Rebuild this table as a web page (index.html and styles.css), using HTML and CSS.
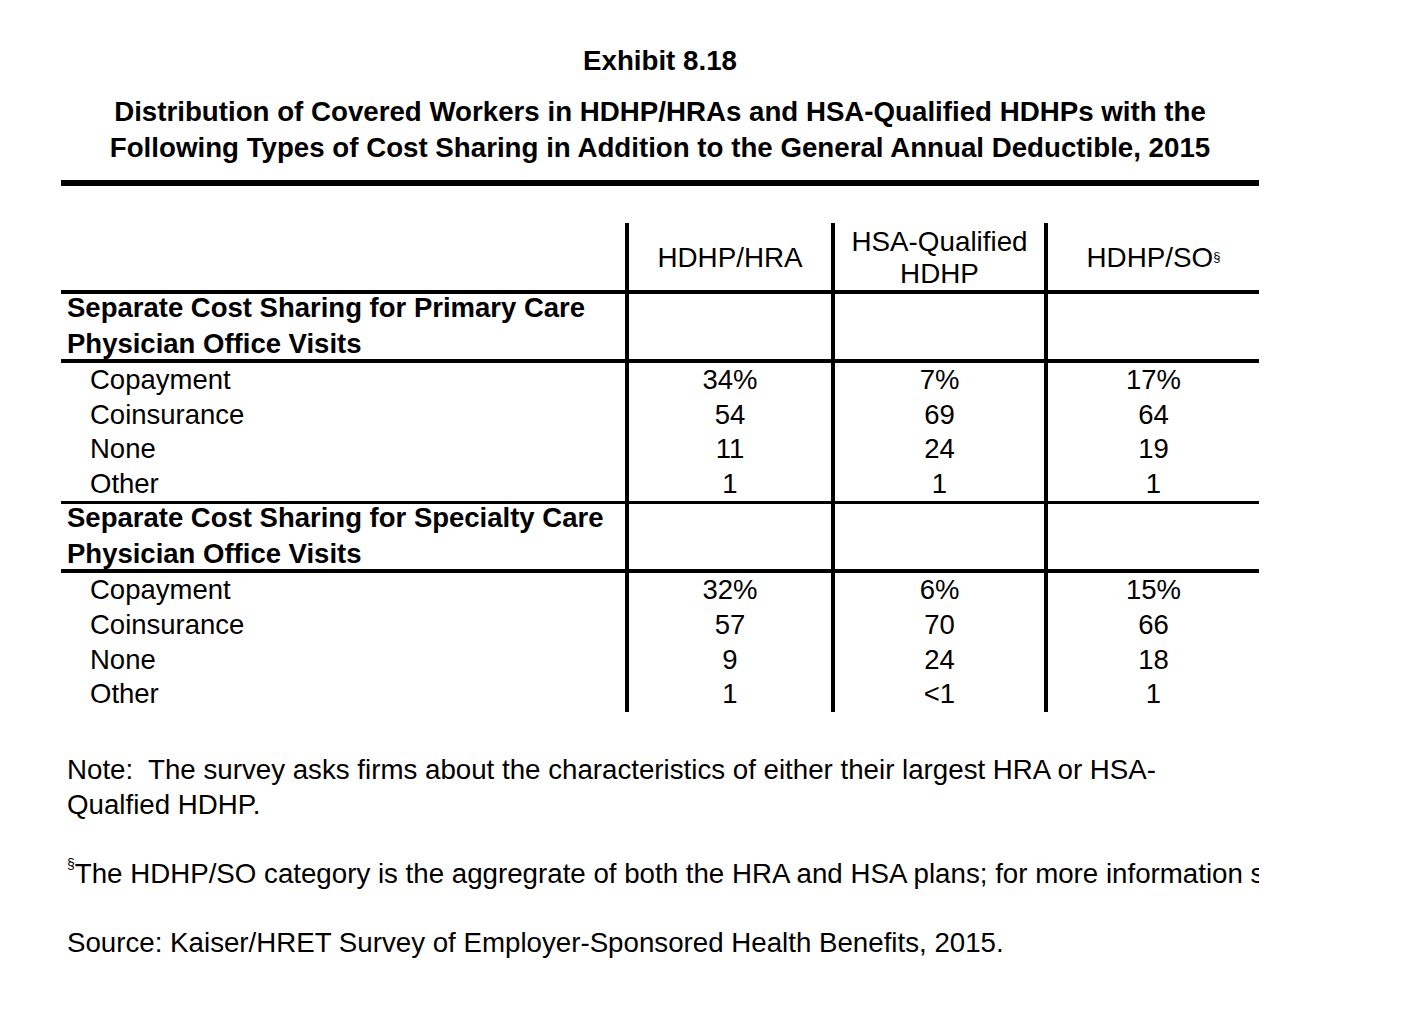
FILE: index.html
```html
<!DOCTYPE html>
<html>
<head>
<meta charset="utf-8">
<link rel="stylesheet" href="styles.css">
</head>
<body>
<div class="page">
  <h1 class="exhibit">Exhibit 8.18</h1>
  <h2 class="title">Distribution of Covered Workers in HDHP/HRAs and HSA-Qualified HDHPs with the<br>Following Types of Cost Sharing in Addition to the General Annual Deductible, 2015</h2>
  <div class="rule"></div>

  <div class="table">
    <div class="row head">
      <div class="label"></div>
      <div class="cell">HDHP/HRA</div>
      <div class="cell">HSA-Qualified<br>HDHP</div>
      <div class="cell">HDHP/SO<sup>§</sup></div>
    </div>

    <div class="row section">
      <div class="label"><span>Separate Cost Sharing for Primary Care<br>Physician Office Visits</span></div>
      <div class="cell"></div><div class="cell"></div><div class="cell"></div>
    </div>
    <div class="group">
      <div class="row data"><div class="label">Copayment</div><div class="cell">34%</div><div class="cell">7%</div><div class="cell">17%</div></div>
      <div class="row data"><div class="label">Coinsurance</div><div class="cell">54</div><div class="cell">69</div><div class="cell">64</div></div>
      <div class="row data"><div class="label">None</div><div class="cell">11</div><div class="cell">24</div><div class="cell">19</div></div>
      <div class="row data"><div class="label">Other</div><div class="cell">1</div><div class="cell">1</div><div class="cell">1</div></div>
    </div>

    <div class="row section thin">
      <div class="label"><span>Separate Cost Sharing for Specialty Care<br>Physician Office Visits</span></div>
      <div class="cell"></div><div class="cell"></div><div class="cell"></div>
    </div>
    <div class="group last">
      <div class="row data"><div class="label">Copayment</div><div class="cell">32%</div><div class="cell">6%</div><div class="cell">15%</div></div>
      <div class="row data"><div class="label">Coinsurance</div><div class="cell">57</div><div class="cell">70</div><div class="cell">66</div></div>
      <div class="row data"><div class="label">None</div><div class="cell">9</div><div class="cell">24</div><div class="cell">18</div></div>
      <div class="row data"><div class="label">Other</div><div class="cell">1</div><div class="cell">&lt;1</div><div class="cell">1</div></div>
    </div>
  </div>

  <div class="notes">
    <p>Note:&nbsp; The survey asks firms about the characteristics of either their largest HRA or HSA-<br>Qualfied HDHP.</p>
    <p class="nowrap"><sup>§</sup>The HDHP/SO category is the aggregrate of both the HRA and HSA plans; for more information see the Introduction to Section 8.</p>
    <p>Source: Kaiser/HRET Survey of Employer-Sponsored Health Benefits, 2015.</p>
  </div>
</div>
</body>
</html>
```

FILE: styles.css
```css
html, body {
  margin: 0;
  padding: 0;
  background: #fff;
}
body {
  font-family: "Liberation Sans", Arial, sans-serif;
  color: #000;
}
.page {
  width: 1198px;
  margin-left: 61px;
  padding-top: 44px;
  overflow: hidden;
}
.exhibit {
  margin: 0;
  font-size: 27.7px;
  font-weight: bold;
  line-height: 34px;
  text-align: center;
}
.title {
  margin: 16px 0 0;
  font-size: 27.7px;
  font-weight: bold;
  line-height: 36px;
  text-align: center;
}
.rule {
  height: 6px;
  background: #000;
  margin-top: 14px;
}
.table {
  margin-top: 37px;
  font-size: 27.5px;
}
.row {
  display: grid;
  grid-template-columns: 564px 206px 213px 215px;
}
.cell {
  border-left: 4px solid #000;
  text-align: center;
}
.head {
  height: 67px;
  border-bottom: 4px solid #000;
}
.head .cell {
  display: flex;
  align-items: center;
  justify-content: center;
  line-height: 32px;
  padding-top: 3px;
  font-size: 27.8px;
}
sup {
  font-size: 13px;
  vertical-align: top;
  line-height: 1;
  position: relative;
  top: -2px;
}
.section {
  height: 65px;
  border-bottom: 4px solid #000;
}
.section .label {
  font-weight: bold;
  line-height: 36px;
  padding-left: 6px;
  margin-top: -4px;
  white-space: nowrap;
}
.group {
  border-bottom: 3px solid #000;
}
.group.last {
  border-bottom: none;
}
.data {
  height: 34.5px;
  line-height: 34.5px;
}
.group.last .data {
  height: 34.75px;
  line-height: 34.75px;
}
.data .label {
  padding-left: 29px;
}
.notes {
  margin-top: 41px;
  font-size: 27.7px;
  line-height: 34.5px;
  padding-left: 6px;
}
.notes p {
  margin: 0 0 34.5px;
}
.notes p.nowrap {
  white-space: nowrap;
}
.notes sup {
  font-size: 14px;
  top: 0;
}
```
